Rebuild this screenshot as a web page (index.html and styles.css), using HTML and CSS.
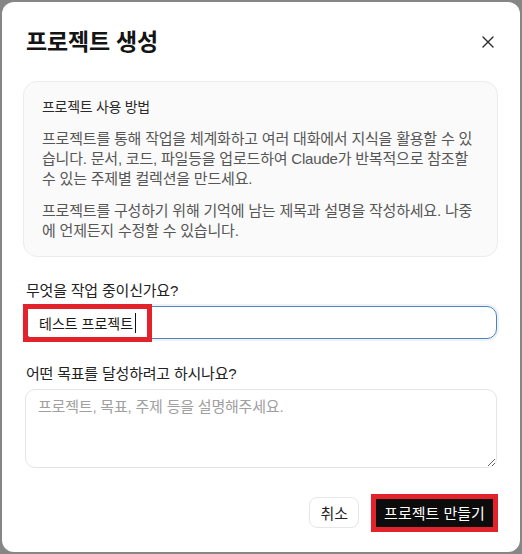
FILE: index.html
```html
<!DOCTYPE html>
<html lang="ko">
<head>
<meta charset="utf-8">
<title>프로젝트 생성</title>
<link rel="stylesheet" href="styles.css">
</head>
<body>
<div class="dialog">
  <header class="head">
    <h1 class="title">프로젝트 생성</h1>
    <button class="close" aria-label="닫기">
      <svg width="12" height="12" viewBox="0 0 12 12"><path d="M1 1L11 11M11 1L1 11" stroke="#2a2a2a" stroke-width="1.4" fill="none" stroke-linecap="round"/></svg>
    </button>
  </header>
  <section class="info">
    <h2 class="info-title">프로젝트 사용 방법</h2>
    <p class="info-text">프로젝트를 통해 작업을 체계화하고 여러 대화에서 지식을 활용할 수 있습니다. 문서, 코드, 파일등을 업로드하여 Claude가 반복적으로 참조할 수 있는 주제별 컬렉션을 만드세요.</p>
    <p class="info-text">프로젝트를 구성하기 위해 기억에 남는 제목과 설명을 작성하세요. 나중에 언제든지 수정할 수 있습니다.</p>
  </section>
  <div class="field">
    <label class="label">무엇을 작업 중이신가요?</label>
    <div class="input">
      <span class="value">테스트 프로젝트</span><span class="caret"></span>
      <span class="mark"></span>
    </div>
  </div>
  <div class="field field-goal">
    <label class="label">어떤 목표를 달성하려고 하시나요?</label>
    <textarea class="area" placeholder="프로젝트, 목표, 주제 등을 설명해주세요."></textarea>
  </div>
  <footer class="actions">
    <button class="btn btn-cancel">취소</button>
    <button class="btn btn-primary">프로젝트 만들기</button>
  </footer>
</div>
</body>
</html>
```
FILE: styles.css
```css
html, body {
  margin: 0;
  height: 100%;
}
body {
  background: #868686;
  padding: 2px;
  box-sizing: border-box;
  font-family: "Liberation Sans", "Noto Sans CJK KR", sans-serif;
  color: #1a1a1a;
}
.dialog {
  width: 518px;
  height: 550px;
  box-sizing: border-box;
  background: #fff;
  border-radius: 12px;
  padding: 25px 22px 0 21px;
  display: flex;
  flex-direction: column;
}
.head {
  display: flex;
  align-items: center;
  justify-content: space-between;
  height: 30px;
}
.title {
  margin: 0 0 0 3px;
  font-size: 23px;
  line-height: 30px;
  font-weight: 700;
  letter-spacing: -0.2px;
  color: #141414;
}
.close {
  border: 0;
  background: none;
  padding: 0;
  width: 12px;
  height: 12px;
  margin-right: 4px;
  display: flex;
}
.info {
  margin-top: 24px;
  border: 1px solid #ececec;
  background: #fafafa;
  border-radius: 14px;
  padding: 15px 18px 15px 18px;
}
.info-title {
  margin: 0;
  font-size: 14px;
  line-height: 20px;
  font-weight: 400;
  letter-spacing: -0.3px;
  color: #2a2a2a;
}
.info-text {
  margin: 12px 0 0;
  font-size: 15px;
  line-height: 20px;
  letter-spacing: -0.2px;
  color: #565656;
}
.field {
  margin-top: 24px;
  padding: 0 1px 0 1px;
  display: flex;
  flex-direction: column;
}
.field-goal {
  margin-top: 25px;
  padding-left: 2px;
}
.label {
  font-size: 15px;
  line-height: 20px;
  font-weight: 400;
  letter-spacing: -0.2px;
  color: #222;
  margin-bottom: 5px;
  padding-left: 2px;
}
.field-goal .label {
  padding-left: 1px;
}
.input {
  position: relative;
  height: 33px;
  box-sizing: border-box;
  border: 1px solid #4f84bb;
  border-radius: 10px;
  box-shadow: 0 0 0 2px rgba(79, 132, 187, 0.10);
  padding: 0 14px;
  display: flex;
  align-items: center;
}
.value {
  font-size: 14px;
  color: #1a1a1a;
}
.caret {
  display: inline-block;
  width: 1px;
  height: 20px;
  margin-left: 2px;
  background: #111;
}
.mark {
  position: absolute;
  left: -2px;
  top: -3px;
  width: 129px;
  height: 38px;
  box-sizing: border-box;
  border: 5px solid #e3232b;
}
.area {
  height: 79px;
  box-sizing: border-box;
  border: 1px solid #e4e4e4;
  border-radius: 10px;
  padding: 7px 12px;
  font-family: "Liberation Sans", "Noto Sans CJK KR", sans-serif;
  font-size: 15px;
  line-height: 20px;
  letter-spacing: -0.2px;
  color: #1a1a1a;
  background: #fff;
  outline: none;
}
.area::placeholder {
  color: #a0a0a0;
}
.actions {
  margin-top: 29px;
  display: flex;
  justify-content: flex-end;
  align-items: center;
  gap: 17px;
  padding-right: 5px;
}
.btn {
  font-family: "Liberation Sans", "Noto Sans CJK KR", sans-serif;
  font-size: 15px;
  cursor: pointer;
}
.btn-cancel {
  height: 31px;
  padding: 0 10px;
  border: 1px solid #e6e6e6;
  border-radius: 8px;
  background: #fff;
  color: #222;
}
.btn-primary {
  height: 28px;
  width: 117px;
  padding: 0;
  border: 0;
  background: #0c0c0c;
  color: #fff;
  outline: 5px solid #e3232b;
}
```
